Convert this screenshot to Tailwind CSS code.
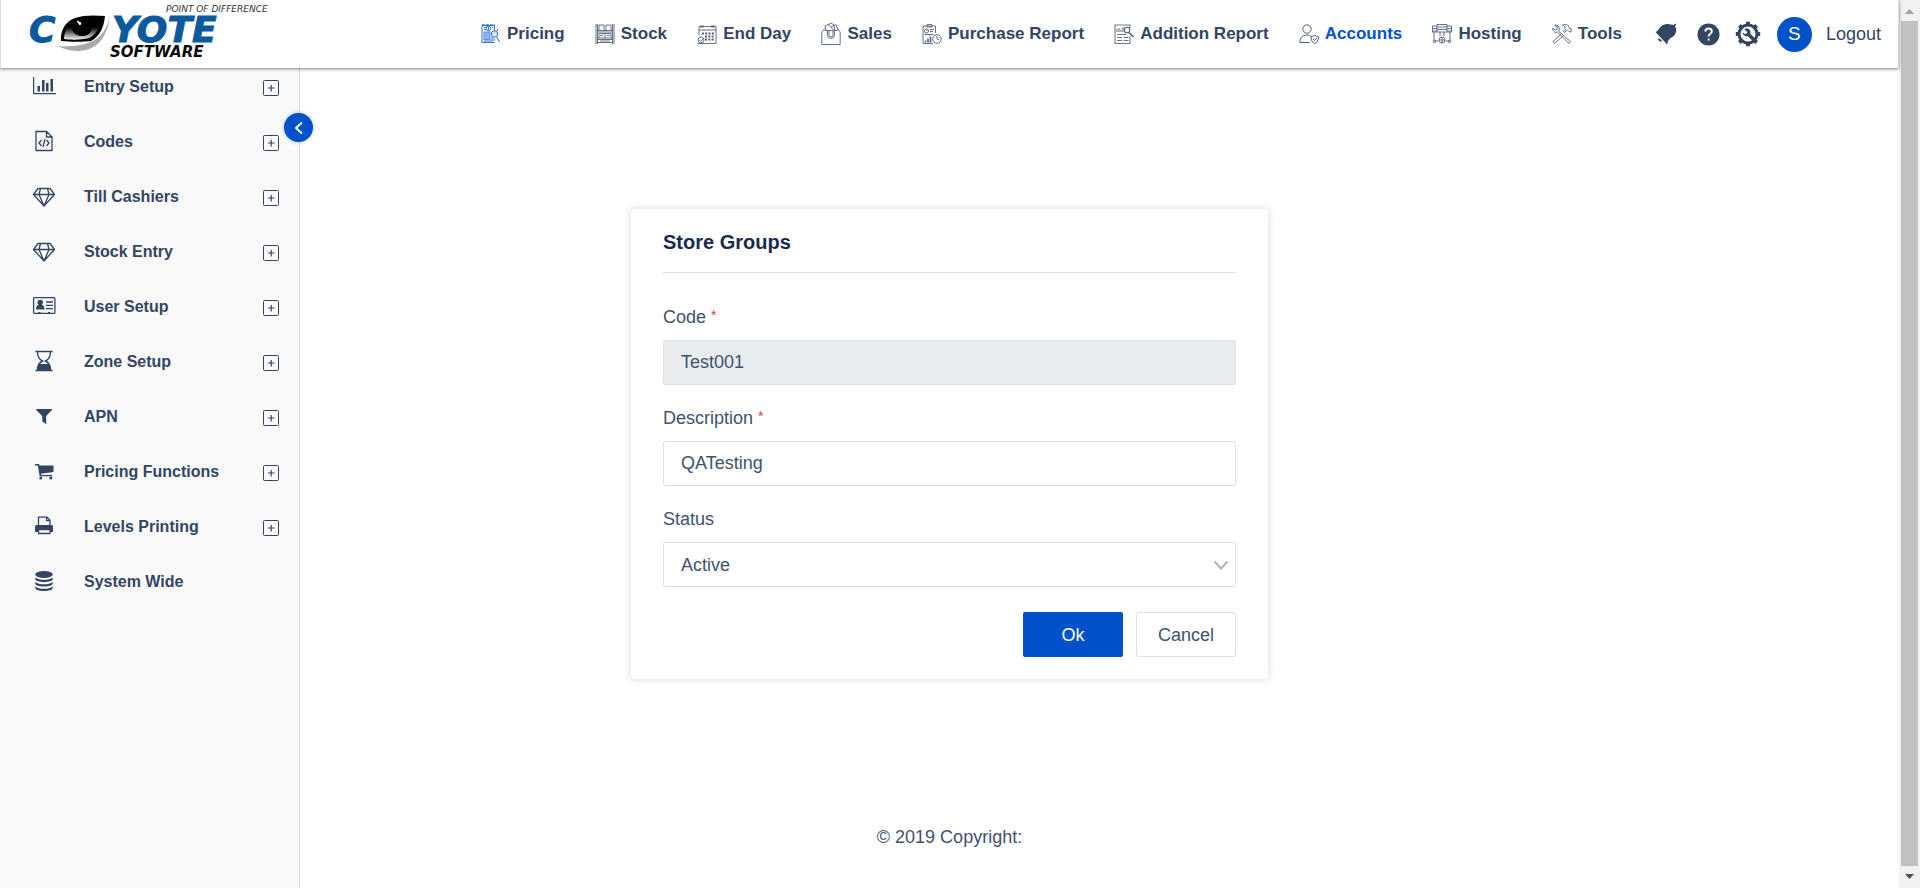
<!DOCTYPE html>
<html lang="en">
<head>
<meta charset="utf-8">
<meta name="viewport" content="width=device-width, initial-scale=1">
<title>Coyote Software - Store Groups</title>
<script src="https://cdn.jsdelivr.net/npm/@tailwindcss/browser@4"></script>
</head>
<body class="flex h-screen overflow-hidden bg-white font-['Liberation_Sans',Arial,sans-serif] text-[18px] leading-6 text-[#42526e]">
<svg class="hidden" aria-hidden="true">
  <symbol id="plus" viewBox="0 0 16 16"><rect x=".5" y=".5" width="15" height="15" rx="1" fill="none" stroke="currentColor"/><path d="M5 8h6.500M8.200 5v6.500" stroke="currentColor" stroke-width="1.200"/></symbol>
  <symbol id="gem" viewBox="0 0 24 24"><path d="M6 3.500h12l4.500 6L12 21 1.500 9.500zM1.500 9.500h21M8.500 3.500 7 9.500l5 11.500 5-11.500-1.500-6" fill="none" stroke="currentColor" stroke-width="1.300" stroke-linejoin="round"/></symbol>
</svg>
<div class="flex min-w-0 flex-1 flex-col">
  <header class="relative z-20 flex h-[68px] shrink-0 items-center border-x border-[#dcdce2] bg-white pr-[17px] pl-[17px] shadow-[0_1px_3px_rgba(0,0,0,0.5)]">
    <a href="#" aria-label="Coyote Software" class="shrink-0">
      <svg class="h-[68px] w-[256px]" viewBox="18 0 256 68">
        <defs><linearGradient id="lid" x1="0" y1="0" x2="0" y2="1"><stop offset=".35" stop-color="#000"/><stop offset="1" stop-color="#f4f4f4"/></linearGradient></defs>
        <path d="M58 46c12 7 34 8 44-7 6-9 7-16 8-24-2 13-9 23-20 27-9 4-20 5-32 4z" fill="#a9abae"/>
        <path d="M61 41c-1-11 5-20 14-23 8-3 19-3 30-2-1 12-6 21-14 25-6 1-22 1-30 0z" fill="#050505"/>
        <path d="M64 39c0-8 4-14 11-17 7-2 17-2 26-1-2 8-6 14-12 17-8 2-18 2-25 1z" fill="url(#lid)"/>
        <path d="M72 22c3-2 16-2 20 0 1 8-2 14-10 14-8 0-12-6-10-14z" fill="#000"/>
        <path d="m77 21 3 4 1-2z" fill="#fff" stroke="#fff" stroke-width="1"/>
        <g font-family="DejaVu Sans, sans-serif" font-style="italic">
          <text x="166" y="12" font-size="9" fill="#333">POINT OF DIFFERENCE</text>
          <g font-weight="bold" fill="#0b5a9d" stroke="#0b5a9d" font-size="36"><text x="29" y="42">C</text><text x="112" y="42">YOTE</text></g>
          <text x="110" y="57" font-size="15" font-weight="bold" fill="#0a0a0a">SOFTWARE</text>
        </g>
      </svg>
    </a>
    <nav aria-label="Main" class="ml-[207px] flex min-w-0 flex-1 items-center justify-between text-[17px] font-bold whitespace-nowrap text-[#344563]">
      <a href="#" class="flex items-center gap-1.5">
        <svg class="size-5" viewBox="0 0 20 20" fill="none" stroke="#2f6fd6"><path d="M13.500 8V1.500H1v17h12.500" /><path d="M1 .8h13" stroke-dasharray="3 1"/><rect x="3" y="8" width="6" height="7.500" fill="#8fb3ee" stroke="#5a8ee2"/><path d="M3 3.500h2M3 5.500h2M11 3.500h1M3 17h8" /><circle cx="7.500" cy="4.500" r="2.300"/><path d="M7.500 3v3"/><circle cx="13.500" cy="10" r="3.200" fill="#dbe7fb"/><path d="m15.500 12.500 3 5.500M11 13v4M13 14v3M16.500 7v-2"/></svg>Pricing</a>
      <a href="#" class="flex items-center gap-1.5">
        <svg class="size-5" viewBox="0 0 20 20" fill="none" stroke="#53627c"><path d="M1 0v20M2.500 0v20M17.500 0v20M19 0v20" stroke-width=".9"/><path d="M2 6.500h16M2 8h16M2 14h16M2 15.500h16M2 18.500h16M4 6V1h5v5M11 6V1h5v5M4 14V9.500h12V14M10 10v4" stroke-width=".9"/><path d="M5 11.500h3M12 11.500h3M5 17h10" stroke-width=".8"/></svg>Stock</a>
      <a href="#" class="flex items-center gap-1.5">
        <svg class="size-5" viewBox="0 0 20 20" fill="none" stroke="#53627c" stroke-width=".9"><path d="M2 11V2.500h17v17H7M2 6h17M4 1v3M6 1v3M15 1v3M17 1v3"/><path d="M5 9.500h12M8 12.500h9M8 15.500h9" stroke-width="2" stroke-dasharray="2 1.300"/><circle cx="4" cy="16" r="3"/><path d="m2.500 16 1.300 1.300L6 15M.5 19.500H7"/></svg>End Day</a>
      <a href="#" class="flex items-center gap-1.5">
        <svg class="h-6 w-5" viewBox="0 0 20 24" fill="none" stroke="#53627c" stroke-width=".9"><path d="M.8 22.500h18.400V10l-3-3.500M.8 22.500V10l3-3.500M3.500 8.500h13"/><path d="M5 8.500 4 4l3-1.500 6 6M7 3l3-2 3 2 1 5.500M10 5l5-2.500L17 8"/><path d="M6.500 9v4a3.500 3.500 0 0 0 7 0V9M8 9v4a2 2 0 0 0 4 0V9"/></svg>Sales</a>
      <a href="#" class="flex items-center gap-1.5">
        <svg class="size-5" viewBox="0 0 20 20" fill="none" stroke="#53627c" stroke-width=".9"><path d="M13.500 9V2H1v17.500h10M5 1.500V.6h5V3H5z"/><circle cx="4.500" cy="7" r="2"/><path d="M4.500 7 6 5M8 5.500h4M8 7.500h3M2.500 10.500h9"/><path d="M3.500 18.500v-2M6 18.500v-4M8.500 18.500v-6" stroke-width="1.600"/><circle cx="15" cy="15" r="4.300"/><path d="M15 12v3l2 1"/></svg>Purchase Report</a>
      <a href="#" class="flex items-center gap-1.5">
        <svg class="size-5" viewBox="0 0 20 20" fill="none" stroke="#6c7990" stroke-width="1.100"><path d="M16 12v7.500H1V1h15v3"/><path d="M3 8V5M5 8V4M7 8V5.500M9 8V3"/><circle cx="13" cy="6" r="2.800" stroke="#53627c"/><path d="m15 8.500 4.500 4.500" stroke="#53627c" stroke-width="1.600"/><path d="M3 10.500h9M3 13.500h5M9.500 13.500h5M3 16.500h5M9.500 16.500h5"/></svg>Addition Report</a>
      <a href="#" aria-current="page" class="flex items-center gap-1.5 text-[#0052cc]">
        <svg class="size-5" viewBox="0 0 20 20" fill="none" stroke="#53627c"><circle cx="8" cy="5" r="4.200"/><path d="M.8 18.500c0-5 3-7.500 7-7.500 2 0 3.300.5 4.400 1.500M.8 18.500h10M12 12.500c1.500 0 2.500-.5 3.800-1.300 1.200.8 2.200 1.300 3.700 1.300 0 3.500-1 6-3.700 7-2.800-1-3.800-3.500-3.800-7z"/><path d="m14 15 1.500 1.500 2.500-2.500"/></svg>Accounts</a>
      <a href="#" class="flex items-center gap-1.5">
        <svg class="size-5" viewBox="0 0 20 20" fill="none" stroke="#53627c" stroke-width=".9"><path d="M.5 2H5M.5 4.500H5M.5 7H5M15 2h4.500M15 4.500h4.500M15 7h4.500M.5 2v6H5V.5h10V8h4.500V2M5 3h10M5 5.500h10M5 8h10M2 8v9h4.500M18 8v9h-4.500M8 8v4M12 8v4"/><circle cx="10" cy="16" r="3"/><path d="M10 13v6M7 16h6"/><circle cx="2.500" cy="17.500" r="1.200"/><circle cx="17.500" cy="17.500" r="1.200"/></svg>Hosting</a>
      <a href="#" class="flex items-center gap-1.5">
        <svg class="size-5" viewBox="0 0 20 20" fill="none" stroke="#53627c" stroke-width=".9"><path d="M3 .8 6.500 2l1 3-1 2L18.500 17.500 17 19.300 5.500 8 3 8.500.8 6v-2L3 6l2-.5.3-2.500L3 2z"/><path d="m9 10-8 7.500 1.500 2L11 12M11 8l2.500-2.500-1-1.500 1-1L10.500 1c3-1 5-.3 6.500 1.200V4l1.200 1 1-.5v3l-1.700.5L15.500 6l-1.200.8-2.300 2"/></svg>Tools</a>
    </nav>
    <div class="ml-[33px] flex shrink-0 items-center text-[#344563]">
      <button type="button" aria-label="Notifications"><svg class="size-[22px]" viewBox="0 0 22 22" fill="currentColor"><path d="M.5 9C4 8 4.500 1.500 12 1c2-.2 5 .8 6.500 1L20.500.5l.8 1L20 3c1.500 3 1.500 6 0 8.500-1.500 2.500-5.500 3.500-7 6.500l-.8 3.500z"/><path d="M3 15.500a3.200 3.200 0 0 0 4 3l-.6-1.500-1.900-1.500z"/></svg></button>
      <button type="button" aria-label="Help" class="ml-5"><svg class="size-[23px]" viewBox="0 0 23 23"><circle cx="11.500" cy="11.500" r="11" fill="currentColor"/><path d="M8.200 8.500c.3-2 1.500-3 3.300-3s3.300 1.200 3.300 2.900c0 2.300-3.200 2.500-3.200 5M11.600 15.500v2" fill="none" stroke="#fff" stroke-width="2"/></svg></button>
      <button type="button" aria-label="Settings" class="ml-[15px]"><svg class="size-[26px]" viewBox="0 0 26 26"><circle cx="13" cy="13" r="9" fill="none" stroke="currentColor" stroke-width="3"/><path d="M13 .8V4M13 22v3.200M.8 13H4M22 13h3.200M4.400 4.400l2.200 2.200M19.400 19.400l2.200 2.200M4.400 21.600l2.200-2.200M19.400 6.600l2.200-2.200" stroke="currentColor" stroke-width="4"/><path d="M9.200 8.200c2-1 4.300-.7 5.500.8.900 1.200 1 2.500.6 3.700l4.700 4.500-2.500 2.500-4.700-4.500c-2.500.7-5-.8-5.200-3.700l2.900 1.700 2-2z" fill="currentColor"/></svg></button>
      <button type="button" aria-label="Profile" class="ml-4 size-[35px] rounded-full bg-[#0052cc] text-[19px] text-white">S</button>
      <a href="#" class="ml-[14px]">Logout</a>
    </div>
  </header>
  <div class="flex min-h-0 flex-1">
    <aside class="relative w-[300px] shrink-0 border-r border-[#d8d8dc] bg-[#f9f9f9]">
      <nav aria-label="Sections" class="pt-[7px] pr-5 pl-8 text-base font-bold text-[#344563]">
        <ul class="flex flex-col gap-[31px]">
          <li><a href="#" class="flex h-6 items-center"><svg class="mr-7 size-6" viewBox="0 0 24 24" fill="currentColor"><path d="M1 2h1.200v16H24v1.200H1z"/><path d="M5.500 11h2.500v5.500H5.500zM10 5h2.500v11.500H10zM14 8h2.500v8.500H14zM18.500 4H21v12.500h-2.500z"/></svg><span class="flex-1">Entry Setup</span><svg class="mt-0.5 size-4"><use href="#plus"/></svg></a></li>
          <li><a href="#" class="flex h-6 items-center"><svg class="mr-7 size-6" viewBox="0 0 24 24" fill="none" stroke="currentColor" stroke-width="1.300"><path d="M4 1.500h10.500l5.500 5.500v13.500H4zM14.500 1.500V7H20M9.500 10 7 13l2.500 3M14.500 10l2.500 3-2.500 3M13 9l-2 8"/></svg><span class="flex-1">Codes</span><svg class="mt-0.5 size-4"><use href="#plus"/></svg></a></li>
          <li><a href="#" class="flex h-6 items-center"><svg class="mr-7 size-6"><use href="#gem"/></svg><span class="flex-1">Till Cashiers</span><svg class="mt-0.5 size-4"><use href="#plus"/></svg></a></li>
          <li><a href="#" class="flex h-6 items-center"><svg class="mr-7 size-6"><use href="#gem"/></svg><span class="flex-1">Stock Entry</span><svg class="mt-0.5 size-4"><use href="#plus"/></svg></a></li>
          <li><a href="#" class="flex h-6 items-center"><svg class="mr-7 size-6" viewBox="0 0 24 24"><rect x="1.600" y="2.600" width="21.300" height="15.800" rx="1.200" fill="none" stroke="currentColor" stroke-width="1.300"/><circle cx="8.200" cy="7.500" r="2.700" fill="currentColor"/><path d="M4 14.500c0-3 1-4.500 2.500-4.500h3.500c1.500 0 2.500 1.500 2.500 4.500z" fill="currentColor"/><path d="M14 7h7M14 10.300h7M14 13.600h7" stroke="currentColor" stroke-width="1.300"/><path d="M6.500 17.500h2M16 17.500h2" stroke="currentColor" stroke-width="1.200"/></svg><span class="flex-1">User Setup</span><svg class="mt-0.5 size-4"><use href="#plus"/></svg></a></li>
          <li><a href="#" class="flex h-6 items-center"><svg class="mr-7 size-6" viewBox="0 0 24 24"><path d="M3.500 1.500h17M3.500 20.500h17M5.500 2c0 5.500 2 7.500 5 9-3 1.500-5 4-5 9M18.500 2c0 5.500-2 7.500-5 9 3 1.500 5 4 5 9" fill="none" stroke="currentColor" stroke-width="1.400"/><path d="M5 20.500c0-2.500.8-5 2-6.500h10c1.200 1.500 2 4 2 6.500z" fill="currentColor"/></svg><span class="flex-1">Zone Setup</span><svg class="mt-0.5 size-4"><use href="#plus"/></svg></a></li>
          <li><a href="#" class="flex h-6 items-center"><svg class="mr-7 size-6" viewBox="0 0 24 24" fill="currentColor"><path d="M4.500 4h15.700l-.3 1-5.700 6v8.200l-4-3V11l-6-6z"/></svg><span class="flex-1">APN</span><svg class="mt-0.5 size-4"><use href="#plus"/></svg></a></li>
          <li><a href="#" class="flex h-6 items-center"><svg class="mr-7 size-6" viewBox="0 0 24 24" fill="currentColor"><path d="M3 4h4l.5 1.500h14V12L9 13.700l.2 1.300h11v1.300H7.700L5.800 5.400H3z"/><circle cx="8.800" cy="18" r="1.500"/><circle cx="18.800" cy="18" r="1.500"/></svg><span class="flex-1">Pricing Functions</span><svg class="mt-0.5 size-4"><use href="#plus"/></svg></a></li>
          <li><a href="#" class="flex h-6 items-center"><svg class="mr-7 size-6" viewBox="0 0 24 24"><path d="M6.500 10V2.200h8.500l3 3V10M14.500 2.500v3.200H18" fill="none" stroke="currentColor" stroke-width="1.300"/><path d="M3 12c0-1.500 1-2 2-2h14c1 0 2 .5 2 2v5h-3v-2H6v2H3z" fill="currentColor"/><path d="M6.500 14.500h11.500v4H6.500z" fill="#f9f9f9" stroke="currentColor" stroke-width="1.300"/></svg><span class="flex-1">Levels Printing</span><svg class="mt-0.5 size-4"><use href="#plus"/></svg></a></li>
          <li><a href="#" class="flex h-6 items-center"><svg class="mr-7 size-6" viewBox="0 0 24 24" fill="currentColor"><ellipse cx="12" cy="4.500" rx="8.700" ry="3.400"/><path id="disc" d="M3.300 7.500c2 1.800 5 2.300 8.700 2.300s6.700-.5 8.700-2.300v1.800c0 1.700-4 2.700-8.700 2.700s-8.700-1-8.700-2.700z"/><use href="#disc" y="4.500"/><use href="#disc" y="9"/></svg><span class="flex-1">System Wide</span></a></li>
        </ul>
      </nav>
      <button type="button" aria-label="Collapse menu" class="absolute top-[45px] -right-[14px] flex size-[29px] items-center justify-center rounded-full bg-[#0052cc] text-white shadow-[0_0_4px_rgba(0,0,0,0.25)]"><svg class="size-4" viewBox="0 0 16 16" fill="none" stroke="currentColor" stroke-width="2"><path d="M11 2.500 5 8l6 5.500"/></svg></button>
    </aside>
    <main class="flex min-w-0 flex-1 flex-col items-center pr-[300px]">
      <form class="mt-[141px] w-full max-w-[637px] rounded-[3px] bg-white px-8 pt-5 pb-[22px] shadow-[0_0_8px_rgba(0,0,0,0.16)]">
        <h1 class="border-b border-[#dfe1e6] pb-[17px] text-xl leading-[26px] font-bold text-[#172b4d]">Store Groups</h1>
        <label for="code" class="mt-8 block">Code <span class="align-top text-sm leading-5 text-[#ee3344]">*</span></label>
        <input id="code" type="text" value="Test001" disabled class="mt-[11px] block h-[45px] w-full rounded-[2px] border border-[#dfe1e6] bg-[#e9ecef] px-[17px]">
        <label for="description" class="mt-[21px] block">Description <span class="align-top text-sm leading-5 text-[#ee3344]">*</span></label>
        <input id="description" type="text" value="QATesting" class="mt-[11px] block h-[45px] w-full rounded-[2px] border border-[#dfe1e6] px-[17px]">
        <label for="status" class="mt-[21px] block">Status</label>
        <div class="relative mt-[11px]">
          <select id="status" class="block h-[45px] w-full appearance-none rounded-[2px] border border-[#dfe1e6] bg-white px-[17px]"><option>Active</option><option>Inactive</option></select>
          <svg class="pointer-events-none absolute top-4 right-[7px] h-3.5 w-4" viewBox="0 0 16 14" fill="none" stroke="#b3bac5" stroke-width="2.500"><path d="m1.500 3.500 6.500 7 6.500-7"/></svg>
        </div>
        <div class="mt-[25px] flex justify-end gap-[13px]">
          <button type="submit" class="h-[45px] w-[100px] rounded-[2px] bg-[#0052cc] text-white">Ok</button>
          <button type="button" class="h-[45px] w-[100px] rounded-[2px] border border-[#dfe1e6]">Cancel</button>
        </div>
      </form>
      <footer class="mt-auto pb-[39px]">© 2019 Copyright:</footer>
    </main>
  </div>
</div>
<div aria-hidden="true" class="flex w-[21px] shrink-0 flex-col items-center bg-[#f1f1f1]">
  <svg class="h-[21px] w-[21px]" viewBox="0 0 21 21"><path d="m6 14 4.500-5 4.500 5z" fill="#a3a3a3"/></svg>
  <div class="w-[17px] flex-1 bg-[#c1c1c1]"></div>
  <svg class="h-[22px] w-[21px]" viewBox="0 0 21 22"><path d="m6 8 4.500 5L15 8z" fill="#505050"/></svg>
</div>
</body>
</html>
